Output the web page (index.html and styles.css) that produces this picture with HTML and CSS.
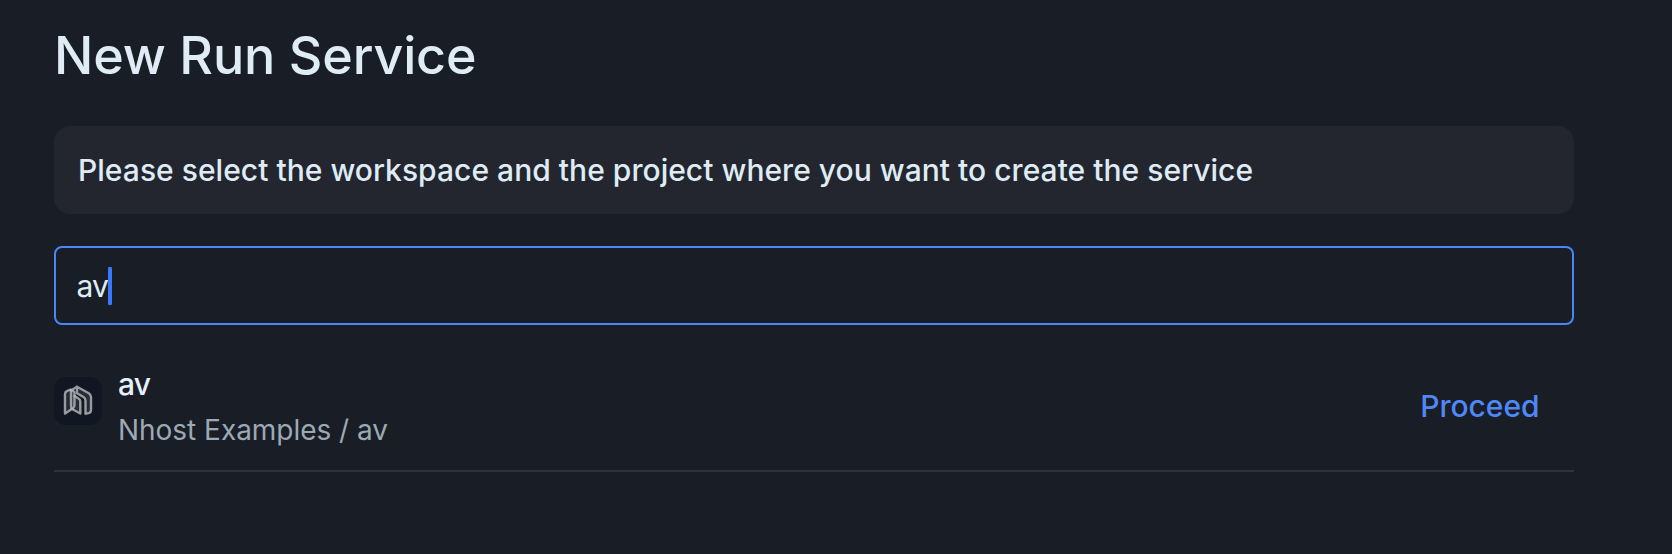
FILE: index.html
```html
<!DOCTYPE html>
<html lang="en">
<head>
<meta charset="utf-8">
<title>New Run Service</title>
<link rel="stylesheet" href="styles.css">
</head>
<body>
<main class="page">
  <h1 class="title"><span>New Run Service</span></h1>
  <div class="notice"><span>Please select the workspace and the project where you want to create the service</span></div>
  <div class="search"><span class="search-text">av</span><span class="caret"></span></div>
  <div class="item">
    <div class="logo">
      <svg class="logo-mark" width="32" height="34" viewBox="0 0 32 34" fill="#a9aeb8" fill-opacity=".13" stroke="#b8babd" stroke-opacity=".8" stroke-width="2.4" stroke-linejoin="round" stroke-linecap="round">
        <path d="M3 29.500V10Q3 8 4.800 7.100L8.500 5.500L12.500 8V21Q12.500 23 11 24.200Z"/>
        <path d="M9 6.500L15 2.800L26.800 9.200Q29 10.600 29 13V26Q29 28.200 27.300 28.800L23.500 29.800V16.500Q23.500 14.200 21.500 13L15 9.200V2.800"/>
        <path d="M9 6.500V22.500Q9 24.300 10.500 25.200L18.300 29.500V17.500Q18.300 15.500 16.500 14.500L12.500 12"/>
      </svg>
    </div>
    <div class="info">
      <div class="name"><span>av</span></div>
      <div class="path"><span>Nhost Examples / av</span></div>
    </div>
    <div class="proceed"><span>Proceed</span></div>
  </div>
</main>
</body>
</html>
```
FILE: styles.css
```css
* { box-sizing: border-box; }

body {
  margin: 0;
  background: #191d25;
  color: #dfecf5;
  font-family: Inter, "Liberation Sans", sans-serif;
}

.page {
  width: 1520px;
  margin-left: 54px;
  padding-top: 25px;
  display: flex;
  flex-direction: column;
}

.title {
  margin: 0 0 39px;
  font-size: 52px;
  line-height: 62px;
  font-weight: 500;
  letter-spacing: -0.16px;
}

.notice {
  height: 88px;
  padding: 0 24px;
  display: flex;
  align-items: center;
  border-radius: 16px;
  background: #23262e;
  font-size: 30px;
  line-height: 44px;
  font-weight: 500;
  letter-spacing: 0.03px;
}

.search {
  height: 79px;
  margin-top: 32px;
  padding: 1px 20.500px 0;
  display: flex;
  align-items: center;
  border: 2px solid #4c86f5;
  border-radius: 8px;
  font-size: 30px;
  font-weight: 400;
  letter-spacing: -0.9px;
}

.caret {
  width: 4px;
  height: 38px;
  border-radius: 1px;
  background: #3878ff;
}

.item {
  height: 147px;
  padding-top: 37px;
  display: flex;
  align-items: flex-start;
  border-bottom: 2px solid #2f333b;
}

.logo {
  width: 48px;
  height: 48px;
  margin-top: 15px;
  display: flex;
  align-items: center;
  justify-content: center;
  border-radius: 12px;
  background: #101723;
}

/* The mark has soft edges. */
.logo-mark {
  filter: blur(0.5px);
}

.info {
  flex: 1;
  margin-left: 16px;
}

.name {
  font-size: 30px;
  line-height: 44px;
  font-weight: 500;
  letter-spacing: -0.7px;
  color: #e6f0fa;
}

.path {
  font-size: 28px;
  line-height: 48px;
  letter-spacing: -0.03px;
  color: #9ca9b4;
}

.proceed {
  margin-top: 22px;
  padding-right: 34.500px;
  font-size: 30px;
  line-height: 44px;
  font-weight: 500;
  letter-spacing: -0.05px;
  color: #4f87f8;
}
```
